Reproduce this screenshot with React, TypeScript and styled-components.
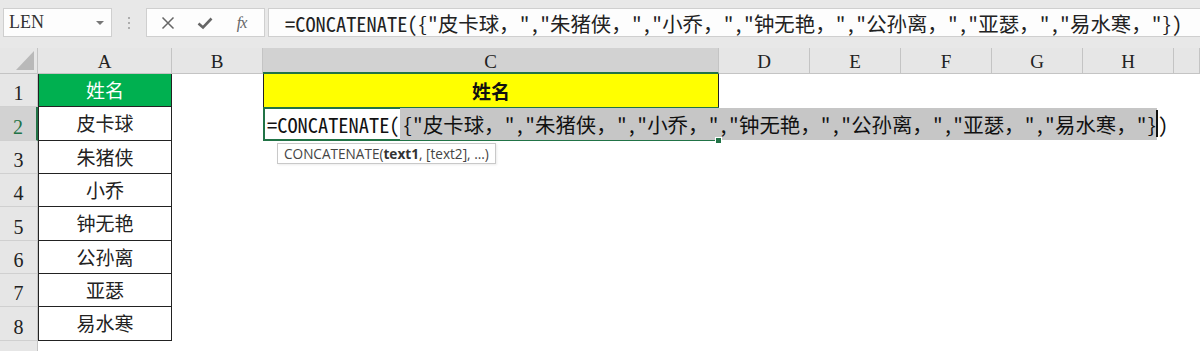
import React from 'react';
import styled, { createGlobalStyle } from 'styled-components';

const GlobalStyle = createGlobalStyle`
  html, body {
    margin: 0;
    padding: 0;
    background: #ffffff;
  }
  body {
    font-family: "Liberation Serif", "Noto Sans CJK SC", serif;
  }
`;

const GREEN = '#217346';
const CJK = '"Noto Sans CJK SC", sans-serif';
const MONO_CJK = '"Noto Sans Mono CJK SC", "Noto Sans CJK SC", monospace';

const Screen = styled.div`
  width: 1200px;
  height: 351px;
  overflow: hidden;
  background: #ffffff;
`;

const Toolbar = styled.div`
  display: flex;
  align-items: flex-start;
  height: 48px;
  box-sizing: border-box;
  padding: 8px 0 0 3px;
  background: #e8e8e8;
`;

const NameBox = styled.div`
  width: 109px;
  height: 29px;
  box-sizing: border-box;
  display: flex;
  align-items: center;
  justify-content: space-between;
  padding: 0 7px 0 5px;
  background: #fdfdfd;
  border: 1px solid #cfcfcf;
  font-family: "Liberation Serif", serif;
  font-size: 18px;
  color: #333;
`;

const DropArrow = styled.span`
  width: 0;
  height: 0;
  border-left: 4px solid transparent;
  border-right: 4px solid transparent;
  border-top: 4px solid #777;
`;

const Grip = styled.div`
  width: 34px;
  height: 29px;
  display: flex;
  flex-direction: column;
  align-items: center;
  justify-content: center;
  gap: 3px;
  span {
    width: 2px;
    height: 2px;
    border-radius: 1px;
    background: #9a9a9a;
  }
`;

const FxButtons = styled.div`
  width: 119px;
  height: 29px;
  box-sizing: border-box;
  display: grid;
  grid-template-columns: 1fr 1fr 1fr;
  align-items: center;
  justify-items: center;
  padding: 0 4px 0 2px;
  background: #fdfdfd;
  border: 1px solid #cfcfcf;
`;

const FxLabel = styled.span`
  font-family: "Liberation Serif", serif;
  font-style: italic;
  font-size: 16px;
  color: #666;
  letter-spacing: -1px;
`;

const FormulaInput = styled.div`
  flex: 1;
  margin-left: 3px;
  height: 29px;
  box-sizing: border-box;
  display: flex;
  align-items: center;
  padding-left: 16px;
  background: #fdfdfd;
  border: 1px solid #cfcfcf;
  border-right: none;
  font-family: ${MONO_CJK};
  font-size: 20.4px;
  color: #222;
  white-space: nowrap;
  overflow: hidden;
`;

const Sheet = styled.div`
  display: grid;
  grid-template-columns: 38px 134px 91px 456px repeat(5, 91px) 1fr;
  grid-template-rows: 26px repeat(9, 33.333px);
`;

const Corner = styled.div`
  box-sizing: border-box;
  display: flex;
  align-items: flex-end;
  justify-content: flex-end;
  padding: 0 3px 3px 0;
  background: #e6e6e6;
  border-right: 1px solid #c4c4c4;
  border-bottom: 1px solid #c4c4c4;
  &::after {
    content: '';
    width: 0;
    height: 0;
    border-left: 18px solid transparent;
    border-bottom: 19px solid #b9b9b9;
  }
`;

const ColHeader = styled.div<{ $selected?: boolean }>`
  box-sizing: border-box;
  display: flex;
  align-items: center;
  justify-content: center;
  padding-top: 3px;
  background: ${(p) => (p.$selected ? '#d2d2d2' : '#e6e6e6')};
  border-right: 1px solid #c4c4c4;
  border-bottom: ${(p) => (p.$selected ? `2px solid ${GREEN}` : '1px solid #c4c4c4')};
  font-family: "Liberation Serif", serif;
  font-size: 19px;
  color: #222;
`;

const RowHeader = styled.div<{ $selected?: boolean }>`
  box-sizing: border-box;
  display: flex;
  align-items: flex-end;
  justify-content: center;
  padding-bottom: 3px;
  background: ${(p) => (p.$selected ? '#d2d2d2' : '#e6e6e6')};
  border-bottom: 1px solid #d0d0d0;
  border-right: ${(p) => (p.$selected ? `2px solid ${GREEN}` : '1px solid #c4c4c4')};
  font-family: "Liberation Serif", serif;
  font-size: 20px;
  line-height: 1;
  color: ${(p) => (p.$selected ? GREEN : '#222')};
`;

const NameCell = styled.div<{ $header?: boolean }>`
  box-sizing: border-box;
  display: flex;
  align-items: center;
  justify-content: center;
  padding-bottom: 1px;
  background: ${(p) => (p.$header ? '#00b050' : '#ffffff')};
  border-left: 1px solid #222;
  border-right: 1px solid #222;
  border-bottom: 1px solid #222;
  font-family: ${CJK};
  font-size: 19px;
  color: ${(p) => (p.$header ? '#ffffff' : '#222')};
`;

const TitleCell = styled.div`
  box-sizing: border-box;
  display: flex;
  align-items: center;
  justify-content: center;
  background: #ffff00;
  border-left: 1px solid #222;
  border-right: 1px solid #222;
  font-family: ${CJK};
  font-weight: 700;
  font-size: 19px;
  color: #111;
`;

const EditCell = styled.div`
  position: relative;
  z-index: 2;
  box-sizing: border-box;
  display: flex;
  align-items: center;
  padding-left: 2px;
  background: #ffffff;
  border: 2px solid ${GREEN};
  font-family: ${MONO_CJK};
  font-size: 20.4px;
  color: #111;
  white-space: nowrap;
  overflow: visible;
`;

const Highlight = styled.span`
  background: #c6c6c6;
  padding: 1px 0 1px 3px;
`;

const Caret = styled.span`
  display: inline-block;
  width: 0;
  height: 27px;
  margin-left: -1px;
  border-left: 2px solid #111;
  vertical-align: middle;
`;

const FillHandle = styled.span`
  position: absolute;
  right: -5px;
  bottom: -5px;
  width: 5px;
  height: 5px;
  background: ${GREEN};
  border: 1px solid #ffffff;
`;

const Tip = styled.div`
  position: absolute;
  left: 12px;
  top: 34px;
  height: 21px;
  box-sizing: border-box;
  display: flex;
  align-items: center;
  padding: 0 6px;
  background: #ffffff;
  border: 1px solid #c9c9c9;
  box-shadow: 1px 1px 2px rgba(0, 0, 0, 0.08);
  font-family: "Open Sans", "Liberation Sans", sans-serif;
  font-size: 13.6px;
  color: #444;
  b {
    font-weight: 700;
    color: #333;
  }
`;

const Cell = styled.div`
  background: #ffffff;
`;

const columns = ['A', 'B', 'C', 'D', 'E', 'F', 'G', 'H', ''];
const names = ['姓名', '皮卡球', '朱猪侠', '小乔', '钟无艳', '公孙离', '亚瑟', '易水寒'];

const parts = ['皮卡球', '朱猪侠', '小乔', '钟无艳', '公孙离', '亚瑟', '易水寒'];
const arrayText = '{' + parts.map((n) => `"${n}，"`).join(',') + '}';
const formula = `=CONCATENATE(${arrayText})`;

const XIcon = () => (
  <svg width="14" height="14" viewBox="0 0 14 14">
    <path d="M1.5 1.5 L12.5 12.5 M12.5 1.5 L1.5 12.5" stroke="#666" strokeWidth="1.5" fill="none" />
  </svg>
);

const CheckIcon = () => (
  <svg width="16" height="14" viewBox="0 0 16 14">
    <path d="M1.5 7.5 L6 11.5 L14.5 2.5" stroke="#666" strokeWidth="2.6" fill="none" />
  </svg>
);

const renderCell = (row: number, col: number) => {
  const key = `${row}-${col}`;
  if (col === 0 && row < 8) {
    return (
      <NameCell key={key} $header={row === 0}>
        {names[row]}
      </NameCell>
    );
  }
  if (col === 2 && row === 0) {
    return <TitleCell key={key}>姓名</TitleCell>;
  }
  if (col === 2 && row === 1) {
    return (
      <EditCell key={key}>
        <span>=CONCATENATE(</span>
        <Highlight>{arrayText}</Highlight>
        <Caret />
        <span>)</span>
        <FillHandle />
        <Tip>
          CONCATENATE(<b>text1</b>, [text2], ...)
        </Tip>
      </EditCell>
    );
  }
  return <Cell key={key} />;
};

const App = () => {
  return (
    <Screen>
      <GlobalStyle />
      <Toolbar>
        <NameBox>
          LEN
          <DropArrow />
        </NameBox>
        <Grip>
          <span />
          <span />
          <span />
        </Grip>
        <FxButtons>
          <XIcon />
          <CheckIcon />
          <FxLabel>fx</FxLabel>
        </FxButtons>
        <FormulaInput>{formula}</FormulaInput>
      </Toolbar>
      <Sheet>
        <Corner />
        {columns.map((c) => (
          <ColHeader key={c || 'I'} $selected={c === 'C'}>
            {c}
          </ColHeader>
        ))}
        {Array.from({ length: 9 }).map((_, row) => (
          <React.Fragment key={row}>
            <RowHeader $selected={row === 1}>{row + 1}</RowHeader>
            {columns.map((_c, col) => renderCell(row, col))}
          </React.Fragment>
        ))}
      </Sheet>
    </Screen>
  );
};

export default App;
